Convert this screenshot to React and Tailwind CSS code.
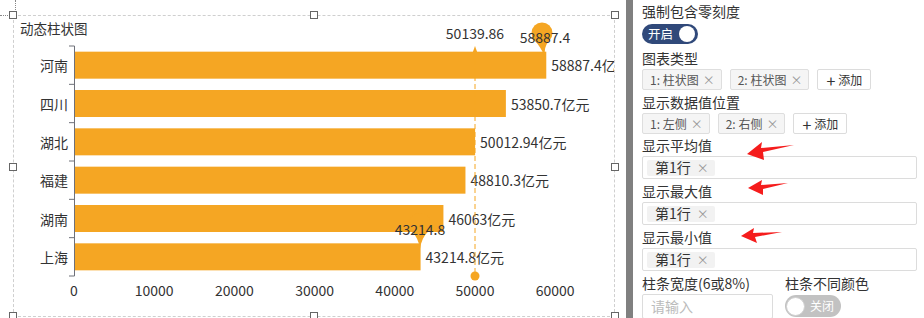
import React from "react";

const FONT = { fontFamily: '"Noto Sans CJK SC", "Noto Sans", sans-serif' };
const ORANGE = "#f5a623";

const rows = [
  { name: "河南", value: 58887.4, label: "58887.4亿元" },
  { name: "四川", value: 53850.7, label: "53850.7亿元" },
  { name: "湖北", value: 50012.94, label: "50012.94亿元" },
  { name: "福建", value: 48810.3, label: "48810.3亿元" },
  { name: "湖南", value: 46063, label: "46063亿元" },
  { name: "上海", value: 43214.8, label: "43214.8亿元" },
];

const X0 = 74;
const SCALE = 401 / 50000;
const TOP = 46;
const BAND = 230 / 6;

function Pin({ cx, cy, r, tx, ty }) {
  const d = `M ${cx - r * 0.75} ${cy + r * 0.66} Q ${cx - r * 0.12} ${cy + r * 1.3} ${tx} ${ty} Q ${cx + r * 0.12} ${cy + r * 1.3} ${cx + r * 0.75} ${cy + r * 0.66} Z`;
  return (
    <g fill={ORANGE}>
      <circle cx={cx} cy={cy} r={r} />
      <path d={d} />
    </g>
  );
}

function BarChart() {
  return (
    <svg width="600" height="300" viewBox="14 16 600 300" className="block">
      <text x="20" y="28" fontSize="13.5" fill="#333" dominantBaseline="central">
        动态柱状图
      </text>

      {rows.map((r, i) => {
        const cy = TOP + BAND * i + BAND / 2;
        const w = r.value * SCALE;
        return (
          <g key={r.name}>
            <rect x={X0} y={cy - 13.5} width={w} height="27" fill={ORANGE} />
            <text x="68" y={cy} fontSize="14" fill="#333" textAnchor="end" dominantBaseline="central">
              {r.name}
            </text>
            <text x={X0 + w + 5} y={cy} fontSize="14" fill="#333" dominantBaseline="central">
              {r.label}
            </text>
          </g>
        );
      })}

      <line x1="74.5" y1="46" x2="74.5" y2="276" stroke="#6e7079" />
      {[0, 1, 2, 3, 4, 5, 6].map((i) => (
        <line key={i} x1="69" y1={TOP + BAND * i} x2="74.5" y2={TOP + BAND * i} stroke="#6e7079" />
      ))}

      {[0, 10000, 20000, 30000, 40000, 50000, 60000].map((v) => (
        <text key={v} x={X0 + v * SCALE} y="290" fontSize="14" fill="#333" textAnchor="middle" dominantBaseline="central">
          {v}
        </text>
      ))}

      {/* average line */}
      <line x1="475" y1="52" x2="475" y2="273" stroke={ORANGE} strokeDasharray="5 3" />
      <polygon points="472.5,53 475,46 477.5,53" fill={ORANGE} />
      <circle cx="475" cy="276" r="4.5" fill={ORANGE} />
      <text x="475" y="33" fontSize="14" fill="#333" textAnchor="middle" dominantBaseline="central">
        50139.86
      </text>

      {/* max / min pins */}
      <Pin cx={542} cy={33} r={10.5} tx={545} ty={57} />
      <text x="545" y="37" fontSize="14" fill="#333" textAnchor="middle" dominantBaseline="central">
        58887.4
      </text>
      <Pin cx={420} cy={224} r={11} tx={420} ty={249} />
      <text x="420" y="229" fontSize="14" fill="#333" textAnchor="middle" dominantBaseline="central">
        43214.8
      </text>
    </svg>
  );
}

function Handle({ className }) {
  return <div className={`absolute h-[8px] w-[8px] border border-[#666] bg-white ${className}`} />;
}

function Cross() {
  return <span className="text-[12px] leading-none text-[#999]">×</span>;
}

function Tag({ children }) {
  return (
    <span className="inline-flex h-[21px] items-center gap-[4px] rounded-[2px] border border-[#dedede] bg-[#f5f5f5] pl-[7px] pr-[6px] text-[12px] text-[#555]">
      {children}
      <Cross />
    </span>
  );
}

function AddButton() {
  return (
    <span className="inline-flex h-[21px] items-center gap-[3px] rounded-[2px] border border-[#dcdcdc] bg-white px-[8px] text-[12px] text-[#333]">
      <span className="text-[16px] leading-none">+</span>
      添加
    </span>
  );
}

function Label({ children, className = "" }) {
  return <div className={`h-5 text-[14px] leading-5 text-[#333] ${className}`}>{children}</div>;
}

function RowBox({ className = "" }) {
  return (
    <div className={`flex h-[23px] items-center rounded-[2px] border border-[#dcdcdc] bg-white pl-[4px] ${className}`}>
      <span className="inline-flex h-[16px] items-center gap-[6px] rounded-[2px] bg-[#f2f2f2] pl-[8px] pr-[6px] text-[14px] text-[#333]">
        第1行
        <Cross />
      </span>
    </div>
  );
}

function Arrows() {
  return (
    <svg className="pointer-events-none absolute left-0 top-0" width="291" height="318" viewBox="633 0 291 318">
      <g fill="#f51c1c">
        <polygon points="747,154 762,142 761,148 794,145 763,152 764,160" />
        <polygon points="748,188 762,180 761,185 788,183 763,189 763,195" />
        <polygon points="741,236 754,228 753,233 782,232 755,237 757,243" />
      </g>
    </svg>
  );
}

export default function App() {
  return (
    <div className="flex h-[318px] w-[924px] overflow-hidden bg-white" style={FONT}>
      <div className="relative w-[626px] shrink-0">
        <div className="absolute left-[15px] top-0 h-[12px] border-l border-dotted border-[#888]" />
        <div className="absolute left-0 top-[15px] w-[10px] border-t border-dotted border-[#888]" />
        <div className="relative ml-[13px] mt-[15px] h-[302px] w-[602px] border border-dashed border-[#cfcfcf]">
          <BarChart />
          <Handle className="-left-[5px] -top-[5px]" />
          <Handle className="left-[296px] -top-[5px]" />
          <Handle className="-right-[5px] -top-[5px]" />
          <Handle className="-left-[5px] top-[147px]" />
          <Handle className="-right-[5px] top-[147px]" />
          <Handle className="-left-[5px] top-[296px]" />
          <Handle className="left-[296px] top-[296px]" />
          <Handle className="-right-[5px] top-[296px]" />
        </div>
      </div>
      <div className="w-[7px] shrink-0 bg-[#808080]" />
      <div className="relative flex-1 pl-[9px] pr-[7px]">
        <Label className="mt-[1px]">强制包含零刻度</Label>
        <div className="mt-[3px] flex h-[20px] w-[56px] items-center justify-between rounded-full bg-[#30497a] pl-[6px] pr-[3px]">
          <span className="text-[12.5px] leading-none text-white">开启</span>
          <span className="h-[16px] w-[16px] rounded-full bg-white" />
        </div>
        <Label className="mt-[4px]">图表类型</Label>
        <div className="mt-[1px] flex gap-[8px]">
          <Tag>1: 柱状图</Tag>
          <Tag>2: 柱状图</Tag>
          <AddButton />
        </div>
        <Label className="mt-[2px]">显示数据值位置</Label>
        <div className="mt-[1px] flex gap-[8px]">
          <Tag>1: 左侧</Tag>
          <Tag>2: 右侧</Tag>
          <AddButton />
        </div>
        <Label className="mt-[1px]">显示平均值</Label>
        <RowBox className="mt-[1px]" />
        <Label className="mt-[2px]">显示最大值</Label>
        <RowBox className="mt-[1px]" />
        <Label className="mt-[2px]">显示最小值</Label>
        <RowBox className="mt-[1px]" />
        <div className="mt-[2px] flex gap-[12px]">
          <div className="w-[131px]">
            <Label>柱条宽度(6或8%)</Label>
            <div className="mt-[1px] flex h-[25px] items-center rounded-[2px] border border-[#dcdcdc] px-[8px] text-[14px] text-[#bbb]">
              请输入
            </div>
          </div>
          <div>
            <Label>柱条不同颜色</Label>
            <div className="mt-[2px] flex h-[22px] w-[56px] items-center gap-[5px] rounded-full bg-[#c2c2c2] pl-[1px]">
              <span className="h-[19px] w-[19px] rounded-full border border-[#d0d0d0] bg-white" />
              <span className="text-[12px] leading-none text-white">关闭</span>
            </div>
          </div>
        </div>
        <Arrows />
      </div>
    </div>
  );
}
